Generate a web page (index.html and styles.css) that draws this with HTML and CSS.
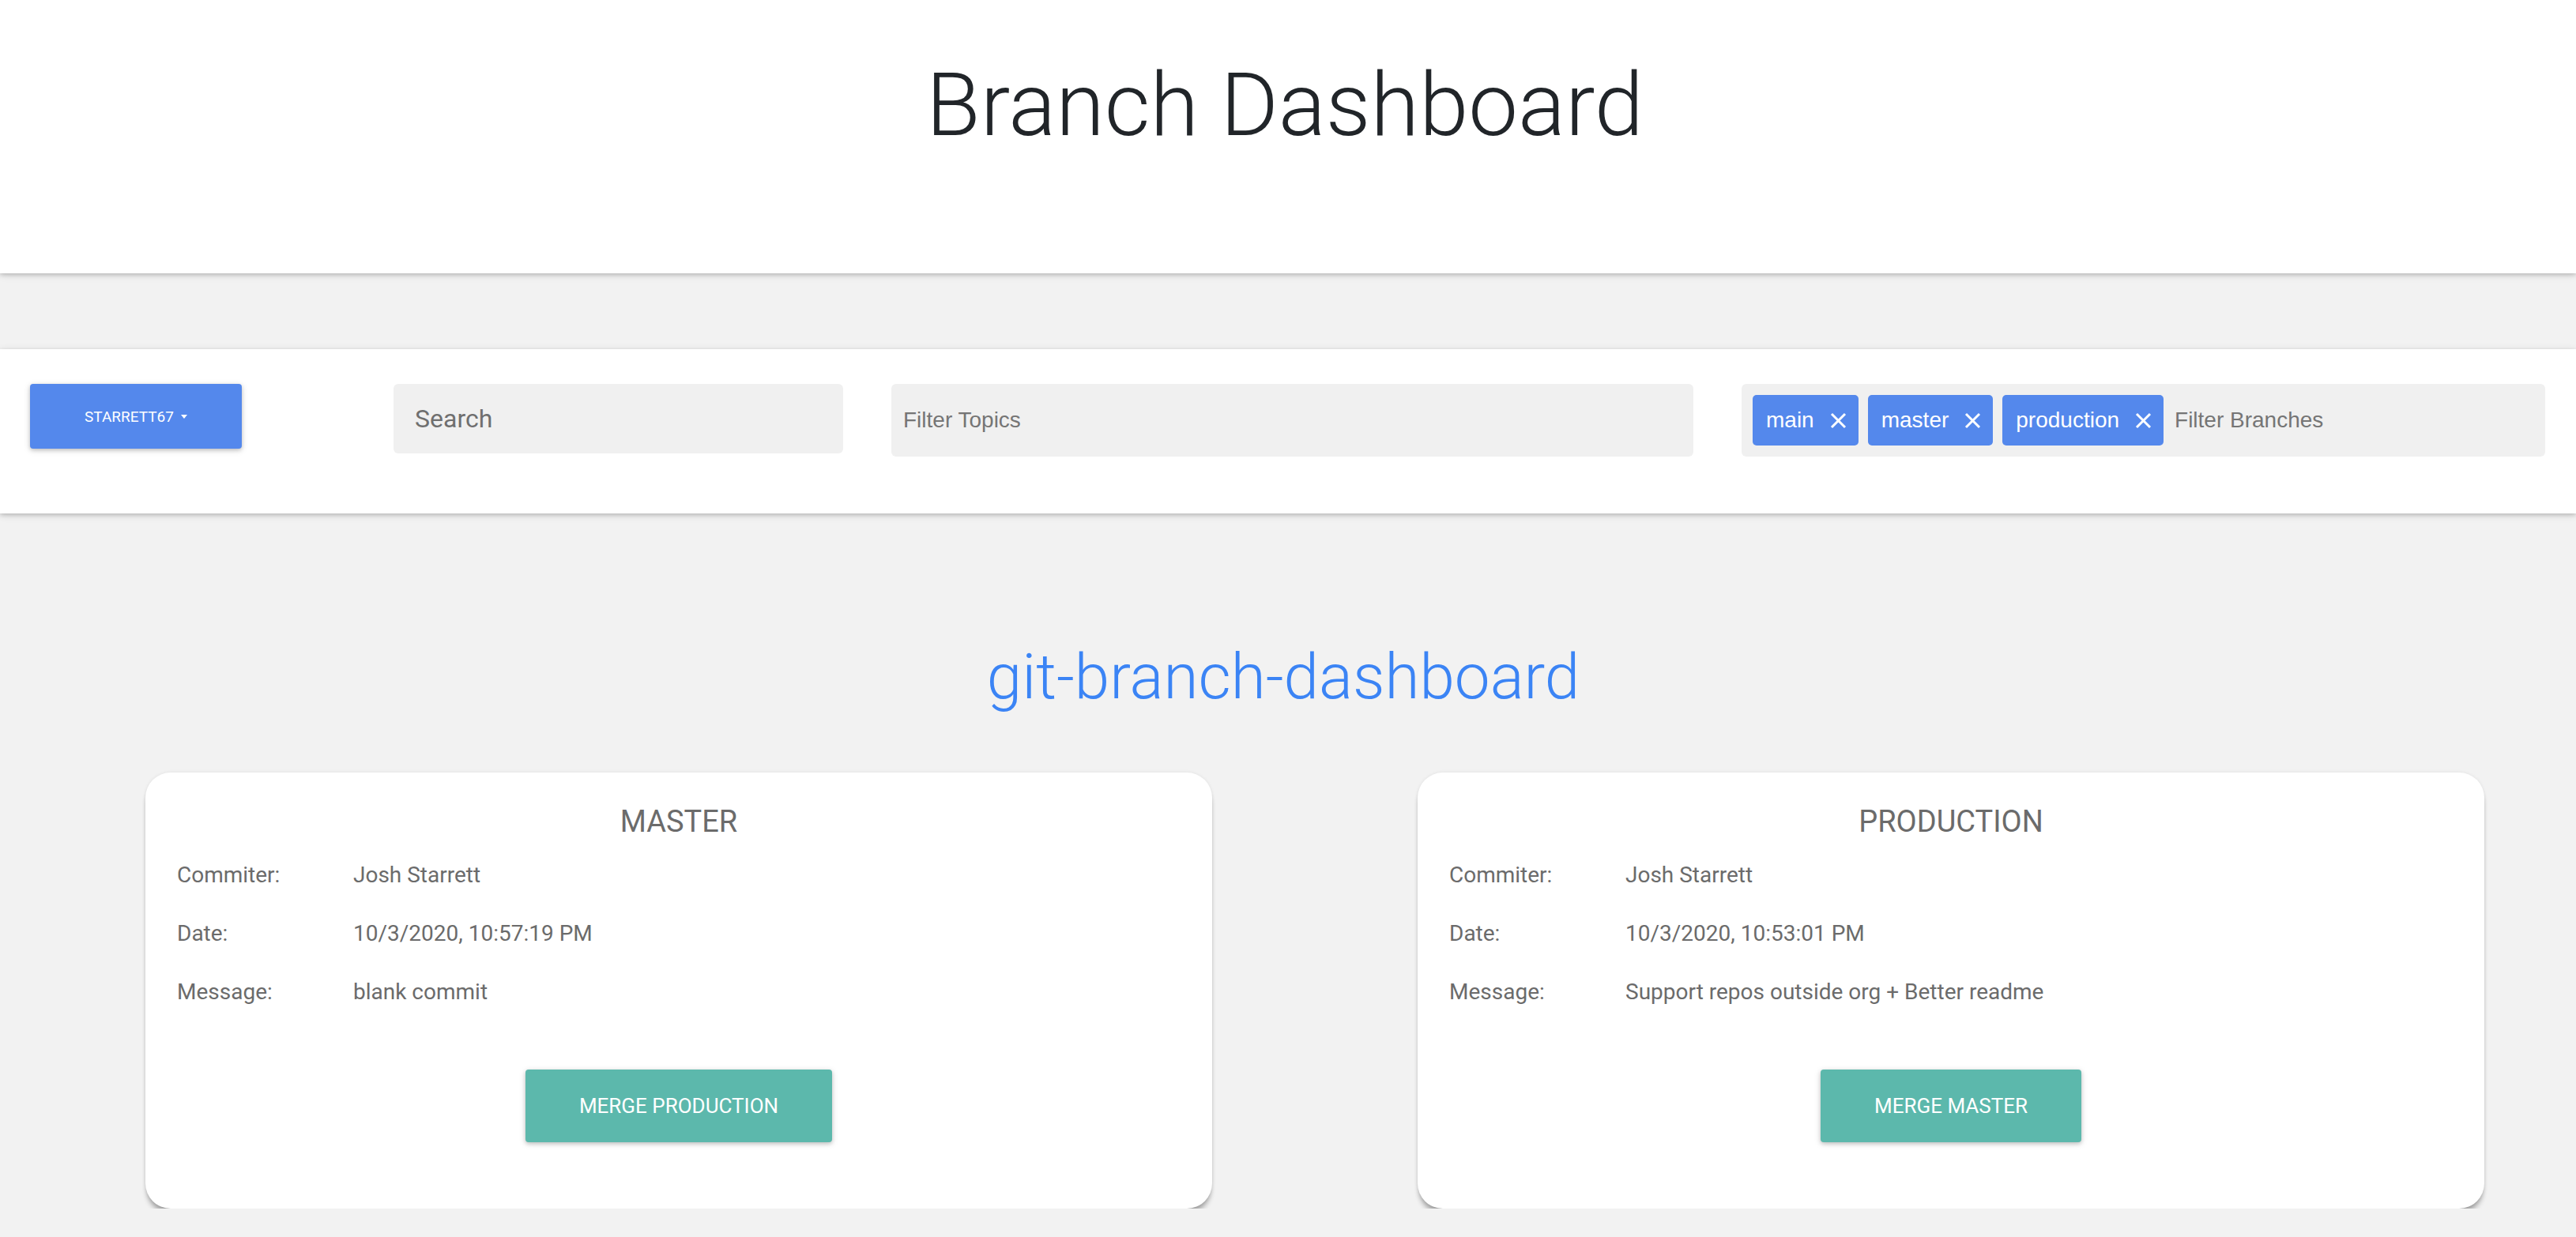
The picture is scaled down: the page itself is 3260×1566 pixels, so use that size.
FILE: index.html
```html
<!DOCTYPE html>
<html lang="en">
<head>
<meta charset="utf-8">
<title>Branch Dashboard</title>
<link rel="stylesheet" href="styles.css">
</head>
<body>
<header class="page-header">
  <h1 class="page-title">Branch Dashboard</h1>
</header>

<nav class="toolbar">
  <button class="user-btn">STARRETT67<span class="caret"></span></button>
  <div class="search-box"><span class="placeholder">Search</span></div>
  <div class="filter-box topics"><span class="placeholder">Filter Topics</span></div>
  <div class="filter-box branches">
    <span class="chip">main<svg class="chip-x" viewBox="0 0 21 21"><path d="M2 2L19 19M19 2L2 19"/></svg></span>
    <span class="chip">master<svg class="chip-x" viewBox="0 0 21 21"><path d="M2 2L19 19M19 2L2 19"/></svg></span>
    <span class="chip">production<svg class="chip-x" viewBox="0 0 21 21"><path d="M2 2L19 19M19 2L2 19"/></svg></span>
    <span class="placeholder">Filter Branches</span>
  </div>
</nav>

<main class="repo">
  <h2 class="repo-title">git-branch-dashboard</h2>
  <div class="cards">
    <section class="card">
      <h3 class="card-title">MASTER</h3>
      <div class="row"><span class="label">Commiter:</span><span class="value">Josh Starrett</span></div>
      <div class="row"><span class="label">Date:</span><span class="value">10/3/2020, 10:57:19 PM</span></div>
      <div class="row"><span class="label">Message:</span><span class="value">blank commit</span></div>
      <div class="actions"><button class="merge-btn">MERGE PRODUCTION</button></div>
    </section>
    <section class="card">
      <h3 class="card-title">PRODUCTION</h3>
      <div class="row"><span class="label">Commiter:</span><span class="value">Josh Starrett</span></div>
      <div class="row"><span class="label">Date:</span><span class="value">10/3/2020, 10:53:01 PM</span></div>
      <div class="row"><span class="label">Message:</span><span class="value">Support repos outside org + Better readme</span></div>
      <div class="actions"><button class="merge-btn">MERGE MASTER</button></div>
    </section>
  </div>
</main>
</body>
</html>
```

FILE: styles.css
```css
* { box-sizing: border-box; }

html, body {
  margin: 0;
  padding: 0;
  background: #f2f2f2;
  font-family: Roboto, "Liberation Sans", Arial, sans-serif;
  overflow: hidden;
}

.page-header {
  height: 346px;
  background: #fff;
  padding-top: 66px;
  box-shadow: 0 2px 5px 0 rgba(0,0,0,.16), 0 2px 10px 0 rgba(0,0,0,.12);
  position: relative;
  z-index: 2;
}

.page-title {
  margin: 0;
  text-align: center;
  font-weight: 300;
  font-size: 112px;
  line-height: 1.2;
  color: #212529;
  padding-right: 8px;
}

.toolbar {
  margin-top: 96px;
  height: 208px;
  background: #fff;
  display: flex;
  align-items: flex-start;
  padding: 44px 39px 0 38px;
  box-shadow: 0 2px 5px 0 rgba(0,0,0,.16), 0 2px 10px 0 rgba(0,0,0,.12);
}

.user-btn {
  width: 268px;
  height: 82px;
  border: 0;
  border-radius: 4px;
  background: #5488ec;
  color: #fff;
  font-family: Roboto, sans-serif;
  font-size: 19px;
  display: flex;
  align-items: center;
  justify-content: center;
  box-shadow: 0 2px 5px 0 rgba(0,0,0,.18), 0 2px 10px 0 rgba(0,0,0,.12);
  padding: 0;
}

.caret {
  display: inline-block;
  margin-left: 9px;
  border-left: 4px solid transparent;
  border-right: 4px solid transparent;
  border-top: 5px solid #fff;
}

.search-box {
  margin-left: 192px;
  width: 569px;
  height: 88px;
  background: #f0f0f0;
  border-radius: 6px;
  display: flex;
  align-items: center;
  padding-left: 27px;
}

.search-box .placeholder {
  font-family: Roboto, sans-serif;
  font-size: 32px;
  color: #6f6f6f;
}

.filter-box {
  height: 92px;
  background: #f0f0f0;
  border-radius: 6px;
  display: flex;
  align-items: center;
  font-family: "Liberation Sans", Arial, sans-serif;
  font-size: 28px;
}

.filter-box .placeholder {
  color: #757575;
}

.topics {
  margin-left: 61px;
  width: 1015px;
  padding-left: 15px;
}

.branches {
  margin-left: 61px;
  flex: 1;
  padding-left: 14px;
  gap: 12px;
}

.branches .placeholder {
  margin-left: 2px;
}

.chip {
  height: 64px;
  background: #5488ec;
  color: #fff;
  border-radius: 5px;
  display: flex;
  align-items: center;
  padding: 0 15px 0 17px;
}

.chip-x {
  width: 21px;
  height: 21px;
  margin-left: 20px;
  stroke: #fff;
  stroke-width: 3;
  fill: none;
}

.repo {
  padding-top: 159px;
}

.repo-title {
  margin: 0;
  text-align: center;
  font-weight: 300;
  font-size: 80px;
  line-height: 1.2;
  color: #3b84f5;
  padding-right: 12px;
}

.cards {
  margin-top: 73px;
  display: flex;
  gap: 260px;
  padding: 0 116px 0 184px;
}

.card {
  width: 1350px;
  background: #fff;
  border-radius: 32px;
  padding: 40px 40px 84px;
  box-shadow: 0 8px 6px -2px rgba(0,0,0,.32), 0 0 4px rgba(0,0,0,.08);
  color: #6b6b6b;
}

.card-title {
  margin: 0 0 7px;
  text-align: center;
  font-weight: 400;
  font-size: 38px;
  line-height: 1.2;
  color: #6b6b6b;
}

.row {
  display: flex;
  height: 74px;
  line-height: 74px;
  font-size: 28px;
}

.label {
  width: 223px;
  flex: none;
}

.actions {
  margin-top: 61px;
  display: flex;
  justify-content: center;
}

.merge-btn {
  height: 92px;
  padding: 0 68px;
  border: 0;
  border-radius: 4px;
  background: #5cb8ac;
  color: #fff;
  font-family: Roboto, sans-serif;
  font-size: 26px;
  box-shadow: 0 2px 5px 0 rgba(0,0,0,.18), 0 2px 10px 0 rgba(0,0,0,.12);
}
```
